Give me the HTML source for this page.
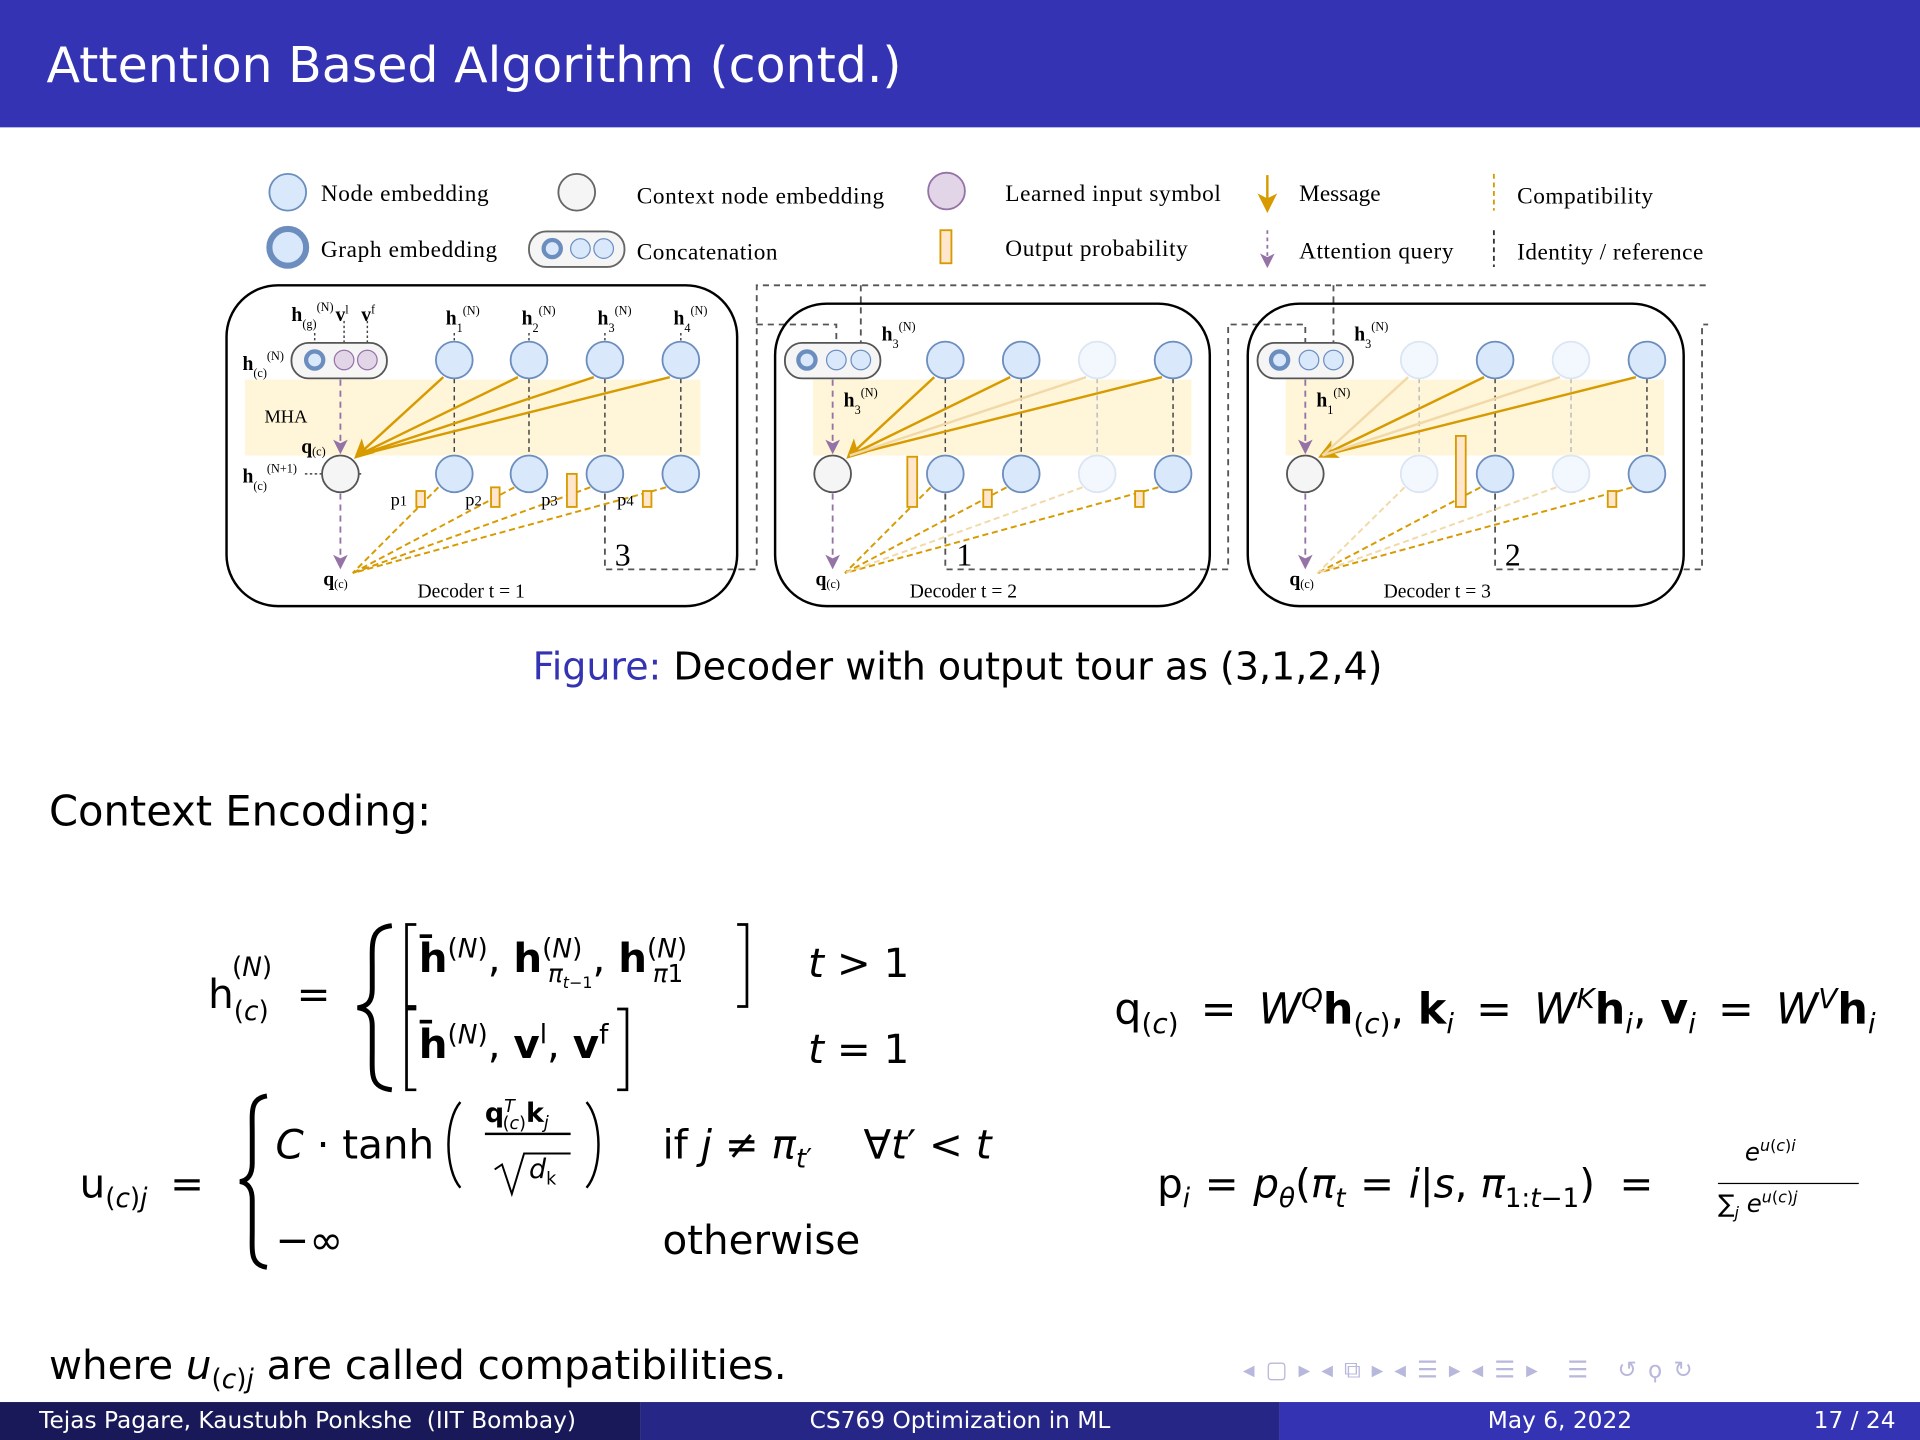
<!DOCTYPE html>
<html><head><meta charset="utf-8"><style>
html,body{margin:0;padding:0;background:#fff;width:1920px;height:1440px;overflow:hidden}
#w{position:absolute;left:0;top:0;width:1568px;height:1176px;transform:scale(1.22449);transform-origin:0 0;font-family:"DejaVu Sans","Liberation Sans",sans-serif}
.a{position:absolute;white-space:nowrap;line-height:1}
.hd{left:0;top:0;width:1568px;height:104px;background:#3333b3}
.m{font-size:33px;color:#000}
i{font-style:italic}
b{font-weight:bold}
sup,sub{font-size:0.65em}
.e{margin:0 12px}
.ft{position:absolute;top:1145px;height:31px;color:#fff;font-size:19px;line-height:31px}
</style></head><body><div id="w">
<div class="a hd"></div>
<div class="a" style="left:38px;top:34px;font-size:40px;color:#fff">Attention Based Algorithm (contd.)</div>

<svg class="a" style="left:0;top:0" width="1568" height="520" viewBox="0 0 1568 520" font-family="Liberation Serif,serif">
<defs>
<marker id="ao" markerWidth="8" markerHeight="8" refX="6" refY="4" orient="auto"><path d="M0,0 L8,4 L0,8 L2,4z" fill="#d79b00"/></marker>
<marker id="ap" markerWidth="8" markerHeight="8" refX="6" refY="4" orient="auto"><path d="M0,0 L8,4 L0,8 L2,4z" fill="#9673a6"/></marker>
</defs>
<g font-size="19">
<circle cx="235" cy="157" r="15" fill="#dae8fc" stroke="#6c8ebf" stroke-width="1.5"/><text x="262" y="164" textLength="137">Node embedding</text>
<circle cx="471" cy="157" r="15" fill="#f5f5f5" stroke="#666" stroke-width="1.5"/><text x="520" y="166" textLength="202">Context node embedding</text>
<circle cx="773" cy="156" r="15" fill="#e1d5e7" stroke="#9673a6" stroke-width="1.5"/><text x="821" y="164" textLength="176">Learned input symbol</text>
<line x1="1035" y1="143" x2="1035" y2="170" stroke="#d79b00" stroke-width="2" marker-end="url(#ao)"/><text x="1061" y="164">Message</text>
<line x1="1220" y1="142" x2="1220" y2="172" stroke="#d79b00" stroke-width="1.5" stroke-dasharray="4,3"/><text x="1239" y="166" textLength="111">Compatibility</text>
<circle cx="235" cy="202" r="15" fill="#dae8fc" stroke="#6c8ebf" stroke-width="5"/><text x="262" y="210" textLength="144">Graph embedding</text>
<rect x="432" y="189" width="78" height="29" rx="14" fill="#f5f5f5" stroke="#666" stroke-width="1.5"/>
<circle cx="451" cy="203" r="7" fill="#dae8fc" stroke="#6c8ebf" stroke-width="3.5"/><circle cx="474" cy="203" r="8" fill="#dae8fc" stroke="#6c8ebf"/><circle cx="493" cy="203" r="8" fill="#dae8fc" stroke="#6c8ebf"/>
<text x="520" y="212" textLength="115">Concatenation</text>
<rect x="768" y="188" width="9" height="27" fill="#ffe6cc" stroke="#d79b00" stroke-width="1.5"/><text x="821" y="209" textLength="149">Output probability</text>
<line x1="1035" y1="188" x2="1035" y2="216" stroke="#9673a6" stroke-width="1.5" stroke-dasharray="3,3" marker-end="url(#ap)"/><text x="1061" y="211" textLength="126">Attention query</text>
<line x1="1220" y1="188" x2="1220" y2="218" stroke="#333" stroke-width="1.5" stroke-dasharray="4,3"/><text x="1239" y="212" textLength="152">Identity / reference</text>
</g>
<g fill="none" stroke="#555" stroke-width="1.5" stroke-dasharray="5,4">
<path d="M494,403 V465 H618 V233 H1395"/>
<path d="M618,265 H683 V280"/>
<path d="M703,233 V280"/>
<path d="M772,403 V465 H1003 V265 H1066 V280"/>
<path d="M1089,233 V280"/>
<path d="M1221,403 V465 H1390 V265 H1395"/>
</g>
<g fill="none" stroke="#000" stroke-width="2">
<rect x="185" y="233" width="417" height="262" rx="42"/>
<rect x="633" y="248" width="355" height="247" rx="42"/>
<rect x="1019" y="248" width="356" height="247" rx="42"/>
</g>
<g fill="#fff2cc" opacity="0.75">
<rect x="200" y="310" width="372" height="62"/><rect x="664" y="310" width="309" height="62"/><rect x="1050" y="310" width="309" height="62"/>
</g>
<g stroke="#444" stroke-width="1.2" stroke-dasharray="4,3">
<path d="M371,309V372M432,309V372M494,309V372M556,309V372"/>
<path d="M772,309V372M834,309V372M958,309V372"/>
<path d="M1221,309V372M1345,309V372"/>
</g>
<g stroke="#bbb" stroke-width="1.2" stroke-dasharray="4,3"><path d="M896,309V372M1159,309V372M1283,309V372"/></g>
<g stroke="#444" stroke-width="1.2" stroke-dasharray="2,2"><path d="M371,272V294M432,272V294M494,272V294M556,272V294M257,272V294M281,262V294M300,262V294M249,387H296"/></g>
<g stroke="#9673a6" stroke-width="1.5" stroke-dasharray="5,4" fill="none">
<path d="M278,310V368" marker-end="url(#ap)"/><path d="M278,403V462" marker-end="url(#ap)"/>
<path d="M680,310V368" marker-end="url(#ap)"/><path d="M680,403V462" marker-end="url(#ap)"/>
<path d="M1066,310V368" marker-end="url(#ap)"/><path d="M1066,403V462" marker-end="url(#ap)"/>
</g>
<g stroke="#d79b00" stroke-width="2" fill="none">
<path d="M362,308L292,372" marker-end="url(#ao)"/><path d="M423,308L292,372"/><path d="M485,308L292,372"/><path d="M547,308L292,372"/>
<path d="M763,308L694,372" marker-end="url(#ao)"/><path d="M825,308L694,372"/><path d="M949,308L694,372"/>
<path d="M1212,308L1080,372" marker-end="url(#ao)"/><path d="M1336,308L1080,372"/>
</g>
<g stroke="#f1d9a8" stroke-width="2"><path d="M887,308L694,372M1150,308L1080,372M1274,308L1080,372"/></g>
<g stroke="#d79b00" stroke-width="1.6" stroke-dasharray="5,3" fill="none">
<path d="M358,398L288,468M420,398L288,468M482,398L288,468M544,398L288,468"/>
<path d="M760,398L690,468M822,398L690,468M946,398L690,468"/>
<path d="M1209,398L1076,468M1333,398L1076,468"/>
</g>
<g stroke="#f1d9a8" stroke-width="1.6" stroke-dasharray="5,3"><path d="M884,398L690,468M1147,398L1076,468M1271,398L1076,468"/></g>
<g fill="#dae8fc" stroke="#6c8ebf" stroke-width="1.5">
<circle cx="371" cy="294" r="15"/><circle cx="432" cy="294" r="15"/><circle cx="494" cy="294" r="15"/><circle cx="556" cy="294" r="15"/>
<circle cx="371" cy="387" r="15"/><circle cx="432" cy="387" r="15"/><circle cx="494" cy="387" r="15"/><circle cx="556" cy="387" r="15"/>
<circle cx="772" cy="294" r="15"/><circle cx="834" cy="294" r="15"/><circle cx="958" cy="294" r="15"/>
<circle cx="772" cy="387" r="15"/><circle cx="834" cy="387" r="15"/><circle cx="958" cy="387" r="15"/>
<circle cx="1221" cy="294" r="15"/><circle cx="1345" cy="294" r="15"/><circle cx="1221" cy="387" r="15"/><circle cx="1345" cy="387" r="15"/>
</g>
<g fill="#f3f8fe" stroke="#dbe5f3" stroke-width="1.5">
<circle cx="896" cy="294" r="15"/><circle cx="896" cy="387" r="15"/><circle cx="1159" cy="294" r="15"/><circle cx="1159" cy="387" r="15"/><circle cx="1283" cy="294" r="15"/><circle cx="1283" cy="387" r="15"/>
</g>
<g fill="#f5f5f5" stroke="#555" stroke-width="1.5">
<circle cx="278" cy="387" r="15"/><circle cx="680" cy="387" r="15"/><circle cx="1066" cy="387" r="15"/>
<rect x="238" y="280" width="78" height="29" rx="14"/><rect x="641" y="280" width="78" height="29" rx="14"/><rect x="1027" y="280" width="78" height="29" rx="14"/>
</g>
<g fill="#dae8fc" stroke="#6c8ebf">
<circle cx="257" cy="294" r="7" stroke-width="3.5"/><circle cx="659" cy="294" r="7" stroke-width="3.5"/><circle cx="1045" cy="294" r="7" stroke-width="3.5"/>
<circle cx="683" cy="294" r="8"/><circle cx="703" cy="294" r="8"/><circle cx="1069" cy="294" r="8"/><circle cx="1089" cy="294" r="8"/>
</g>
<g fill="#e1d5e7" stroke="#9673a6"><circle cx="281" cy="294" r="8"/><circle cx="300" cy="294" r="8"/></g>
<g fill="#ffe6cc" stroke="#d79b00" stroke-width="1.5">
<rect x="340" y="401" width="7" height="13"/><rect x="401" y="398" width="7" height="16"/><rect x="463" y="387" width="8" height="27"/><rect x="525" y="401" width="7" height="13"/>
<rect x="741" y="373" width="8" height="41"/><rect x="803" y="400" width="7" height="14"/><rect x="927" y="401" width="7" height="13"/>
<rect x="1189" y="356" width="8" height="58"/><rect x="1313" y="401" width="7" height="13"/>
</g>
<g font-size="15">
<text x="216" y="345">MHA</text>
<text x="319" y="413">p<tspan font-size="12">1</tspan></text><text x="380" y="413">p<tspan font-size="12">2</tspan></text><text x="442" y="413">p<tspan font-size="12">3</tspan></text><text x="504" y="413">p<tspan font-size="12">4</tspan></text>
<text x="341" y="488" font-size="16">Decoder t = 1</text><text x="743" y="488" font-size="16">Decoder t = 2</text><text x="1130" y="488" font-size="16">Decoder t = 3</text>
<text x="502" y="462" font-size="26">3</text><text x="781" y="462" font-size="26">1</text><text x="1229" y="462" font-size="26">2</text>
<g font-weight="bold" font-size="16">
<text x="364" y="265">h<tspan font-size="10" dy="6" font-weight="normal">1</tspan><tspan font-size="10" dy="-14" font-weight="normal">(N)</tspan></text>
<text x="426" y="265">h<tspan font-size="10" dy="6" font-weight="normal">2</tspan><tspan font-size="10" dy="-14" font-weight="normal">(N)</tspan></text>
<text x="488" y="265">h<tspan font-size="10" dy="6" font-weight="normal">3</tspan><tspan font-size="10" dy="-14" font-weight="normal">(N)</tspan></text>
<text x="550" y="265">h<tspan font-size="10" dy="6" font-weight="normal">4</tspan><tspan font-size="10" dy="-14" font-weight="normal">(N)</tspan></text>
<text x="238" y="262">h<tspan font-size="10" dy="6" font-weight="normal">(g)</tspan><tspan font-size="10" dy="-14" font-weight="normal">(N)</tspan></text>
<text x="274" y="262">v<tspan font-size="10" dy="-6" font-weight="normal">l</tspan></text><text x="295" y="262">v<tspan font-size="10" dy="-6" font-weight="normal">f</tspan></text>
<text x="198" y="302">h<tspan font-size="10" dy="6" font-weight="normal">(c)</tspan><tspan font-size="10" dy="-14" font-weight="normal">(N)</tspan></text>
<text x="198" y="394">h<tspan font-size="10" dy="6" font-weight="normal">(c)</tspan><tspan font-size="10" dy="-14" font-weight="normal">(N+1)</tspan></text>
<text x="246" y="370">q<tspan font-size="10" dy="2" font-weight="normal">(c)</tspan></text>
<text x="264" y="478">q<tspan font-size="10" dy="2" font-weight="normal">(c)</tspan></text>
<text x="666" y="478">q<tspan font-size="10" dy="2" font-weight="normal">(c)</tspan></text>
<text x="1053" y="478">q<tspan font-size="10" dy="2" font-weight="normal">(c)</tspan></text>
<text x="720" y="278">h<tspan font-size="10" dy="6" font-weight="normal">3</tspan><tspan font-size="10" dy="-14" font-weight="normal">(N)</tspan></text>
<text x="689" y="332">h<tspan font-size="10" dy="6" font-weight="normal">3</tspan><tspan font-size="10" dy="-14" font-weight="normal">(N)</tspan></text>
<text x="1106" y="278">h<tspan font-size="10" dy="6" font-weight="normal">3</tspan><tspan font-size="10" dy="-14" font-weight="normal">(N)</tspan></text>
<text x="1075" y="332">h<tspan font-size="10" dy="6" font-weight="normal">1</tspan><tspan font-size="10" dy="-14" font-weight="normal">(N)</tspan></text>
</g></g>
</svg>

<div class="a" style="left:435px;top:530px;font-size:31px"><span style="color:#3333b3">Figure:</span> Decoder with output tour as (3,1,2,4)</div>
<div class="a" style="left:40px;top:646px;font-size:34px">Context Encoding:</div>

<svg class="a" style="left:0;top:0" width="1568" height="1100">
<g fill="none" stroke="#000" stroke-width="2.2">
<path d="M340,755H332V822H340M602,755H610V822H602"/>
<path d="M340,824H332V890H340M504,824H512V890H504"/>
<path d="M320,756 C302,758 304,770 304,790 V808 C304,818 300,822 292,823 C300,824 304,828 304,838 V858 C304,878 302,888 320,890" stroke-width="4"/>
<path d="M218,895 C204,897 206,908 206,925 V950 C206,960 202,964 196,965 C202,966 206,970 206,980 V1005 C206,1022 204,1033 218,1035" stroke-width="4"/>
<path d="M376,900 C363,915 363,955 376,970 M479,900 C492,915 492,955 479,970" stroke-width="2"/>
<path d="M404,955 L410,951 L418,975 L428,942 H466" stroke-width="1.6"/>
</g>
</svg>

<div class="a m" style="left:170px;top:795px">h<sub style="vertical-align:-10px">(<i>c</i>)</sub><sup style="position:relative;left:-30px;top:-26px;vertical-align:0">(<i>N</i>)</sup><span style="position:relative;left:-10px">=</span></div>
<div class="a m" style="left:342px;top:765px"><b>h̄</b><sup>(<i>N</i>)</sup>, <b>h</b><sup>(<i>N</i>)</sup><sub style="font-size:20px;margin-left:-28px"><i>π</i><sub><i>t</i>−1</sub></sub>, <b>h</b><sup>(<i>N</i>)</sup><sub style="font-size:20px;margin-left:-28px"><i>π</i>1</sub></div>
<div class="a m" style="left:660px;top:770px"><i>t</i> &gt; 1</div>
<div class="a m" style="left:342px;top:835px"><b>h̄</b><sup>(<i>N</i>)</sup>, <b>v</b><sup>l</sup>, <b>v</b><sup>f</sup></div>
<div class="a m" style="left:660px;top:840px"><i>t</i> = 1</div>

<div class="a m" style="left:910px;top:805px;font-size:35px">q<sub>(<i>c</i>)</sub><span class="e" style="margin:0 18px">=</span><i>W</i><sup><i>Q</i></sup><b>h</b><sub>(<i>c</i>)</sub>, <b>k</b><sub><i>i</i></sub><span class="e" style="margin:0 18px">=</span><i>W</i><sup><i>K</i></sup><b>h</b><sub><i>i</i></sub>, <b>v</b><sub><i>i</i></sub><span class="e" style="margin:0 18px">=</span><i>W</i><sup><i>V</i></sup><b>h</b><sub><i>i</i></sub></div>

<div class="a m" style="left:65px;top:950px">u<sub>(<i>c</i>)<i>j</i></sub> <span style="margin-left:8px">=</span></div>
<div class="a m" style="left:225px;top:918px"><i>C</i> · tanh</div>
<div class="a" style="left:396px;top:897px;font-size:22px"><b>q</b><sup><i>T</i></sup><sub style="margin-left:-10px">(<i>c</i>)</sub><b>k</b><sub><i>j</i></sub></div>
<div class="a" style="left:396px;top:925px;width:70px;border-top:2px solid #000"></div>
<div class="a" style="left:432px;top:945px;font-size:22px"><i>d</i><sub>k</sub></div>
<div class="a m" style="left:541px;top:918px">if <i>j</i> ≠ <i>π</i><sub><i>t</i>′</sub> &nbsp;&nbsp; ∀<i>t</i>′ &lt; <i>t</i></div>
<div class="a m" style="left:225px;top:996px">−∞</div>
<div class="a m" style="left:541px;top:996px">otherwise</div>

<div class="a m" style="left:945px;top:950px">p<sub><i>i</i></sub><span class="e">=</span><i>p<sub>θ</sub></i>(<i>π<sub>t</sub></i><span class="e">=</span><i>i</i>|<i>s</i>, <i>π</i><sub>1:<i>t</i>−1</sub>)<span class="e" style="margin-left:20px">=</span></div>
<div class="a" style="left:1425px;top:930px;font-size:20px"><i>e</i><sup><i>u</i>(<i>c</i>)<i>i</i></sup></div>
<div class="a" style="left:1403px;top:966px;width:115px;border-top:1.5px solid #000"></div>
<div class="a" style="left:1403px;top:972px;font-size:20px">∑<sub><i>j</i></sub> <i>e</i><sup><i>u</i>(<i>c</i>)<i>j</i></sup></div>

<div class="a" style="left:40px;top:1098px;font-size:33px">where <i>u</i><sub>(<i>c</i>)<i>j</i></sub> are called compatibilities.</div>
<div class="a" style="left:1015px;top:1110px;font-size:19px;color:#b8b8dc;letter-spacing:9px">◂▢▸◂⧉▸◂☰▸◂☰▸ ☰ ↺ϙ↻</div>

<div class="ft" style="left:0;width:523px;background:#191959"><span style="margin-left:32px">Tejas Pagare, Kaustubh Ponkshe &nbsp;(IIT Bombay)</span></div>
<div class="ft" style="left:523px;width:522px;background:#262686;text-align:center">CS769 Optimization in ML</div>
<div class="ft" style="left:1045px;width:523px;background:#3333b3"><span style="margin-left:170px">May 6, 2022</span><span style="position:absolute;right:20px">17 / 24</span></div>
</div></body></html>
